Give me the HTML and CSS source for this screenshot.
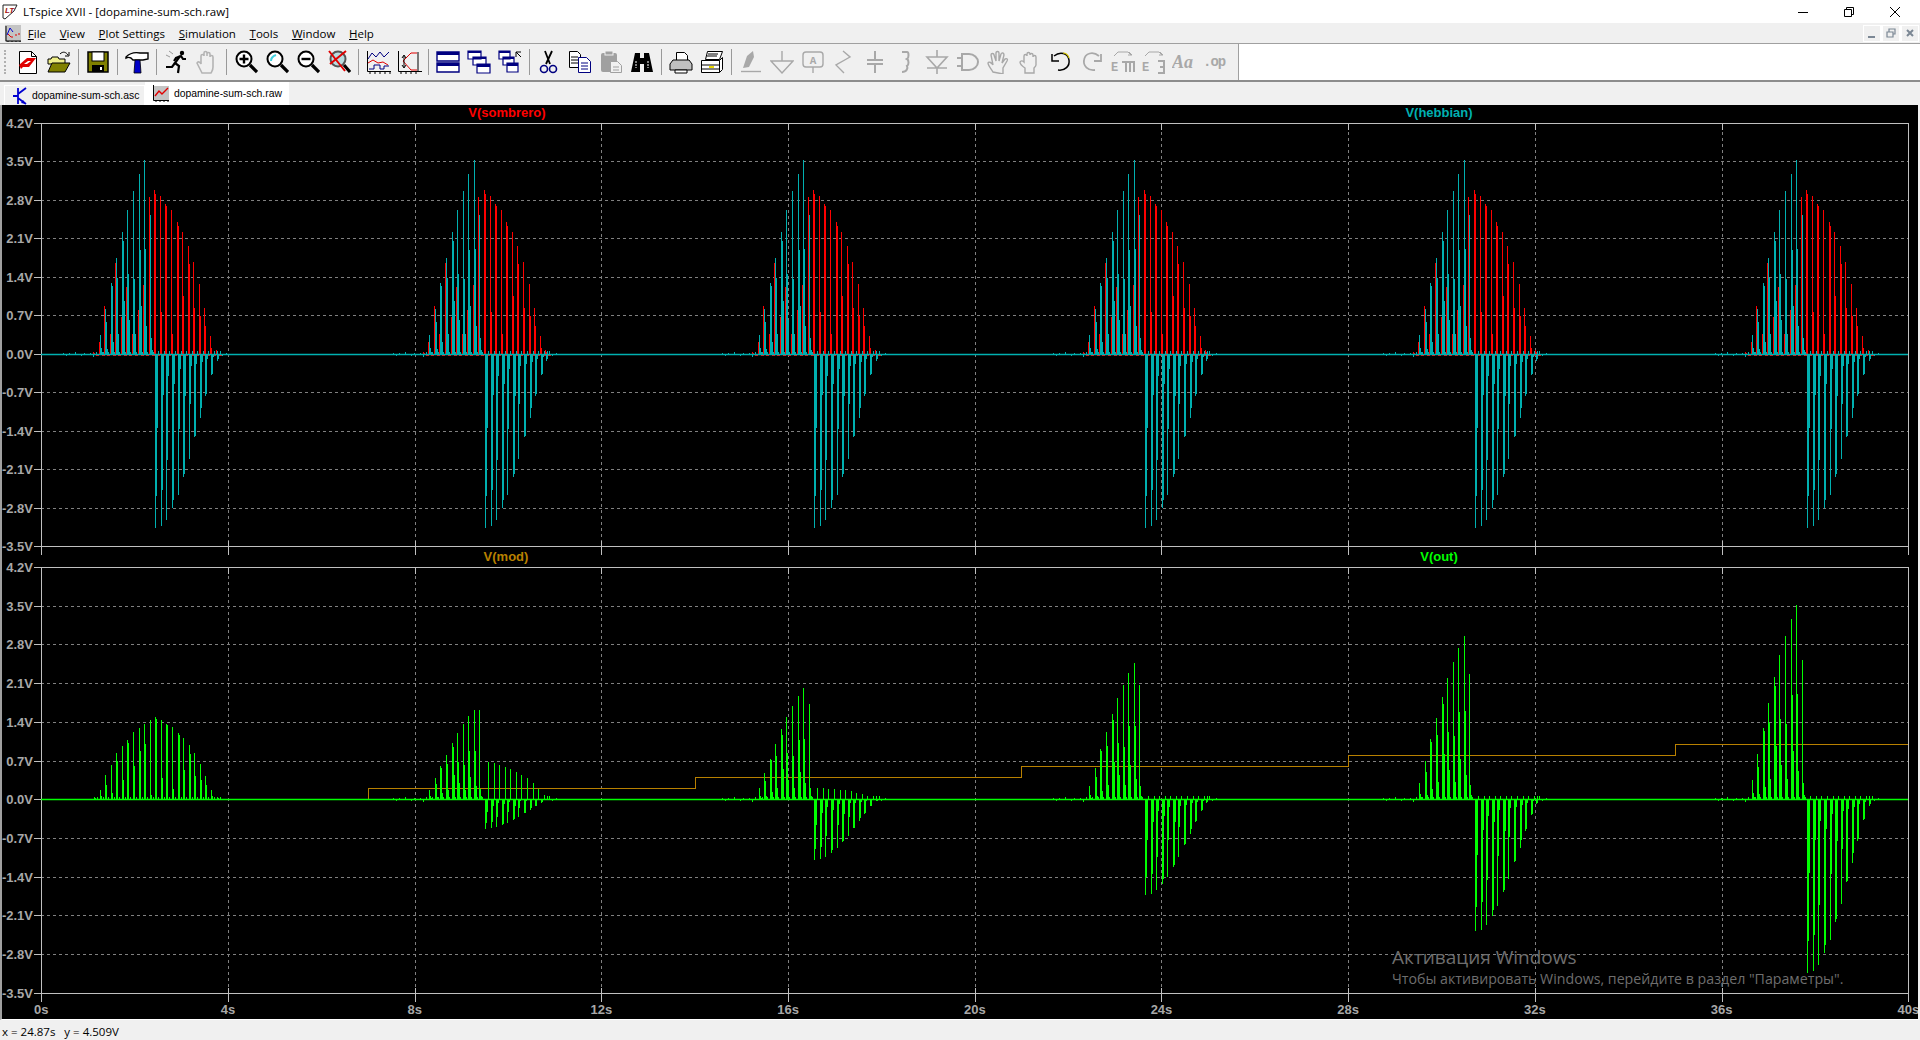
FILE: index.html
```html
<!DOCTYPE html>
<html lang="en">
<head>
    <meta charset="UTF-8">
    <title>LTspice XVII - [dopamine-sum-sch.raw]</title>
    <link rel="stylesheet" href="styles.css">
</head>
<body>
    <div class="titlebar">
        <svg class="app-icon" width="16" height="16" viewBox="0 0 16 16"><path d="M1 1h14l-3 6-9 8-2-1z" fill="#fff" stroke="#222"/><text x="3" y="9" class="logo-text">LT</text></svg>
        <span class="title">LTspice XVII - [dopamine-sum-sch.raw]</span>
        <div class="win-btns">
            <svg width="12" height="12" viewBox="0 0 12 12"><path d="M1 6.5h10" stroke="#000"/></svg>
            <svg width="12" height="12" viewBox="0 0 12 12"><path d="M1.5 3.5h7v7h-7zM3.5 3.5v-2h7v7h-2" fill="none" stroke="#000"/></svg>
            <svg width="12" height="12" viewBox="0 0 12 12"><path d="M1 1l10 10M11 1L1 11" stroke="#000"/></svg>
        </div>
    </div>

    <div class="menubar">
        <svg class="doc-icon" width="16" height="17" viewBox="0 0 16 17"><rect width="16" height="17" fill="#c4c4c4"/><path d="M1 1v15h15M3 16v1M7 16v1M11 16v1M15 16v1" fill="none" stroke="#000"/><path d="M2 10l3-7 3 4" fill="none" stroke="#0000d0"/><path d="M3 9l3 3h2M10 10h2M13 9h2" fill="none" stroke="#e00000"/></svg>
        <span class="menu-item"><u>F</u>ile</span>
        <span class="menu-item"><u>V</u>iew</span>
        <span class="menu-item"><u>P</u>lot Settings</span>
        <span class="menu-item"><u>S</u>imulation</span>
        <span class="menu-item"><u>T</u>ools</span>
        <span class="menu-item"><u>W</u>indow</span>
        <span class="menu-item"><u>H</u>elp</span>
        <div class="mdi-btns">
            <span class="mdi-btn"><svg width="10" height="10" viewBox="0 0 10 10"><path d="M1 9h7" stroke="#7b8794" stroke-width="2"/></svg></span>
            <span class="mdi-btn"><svg width="10" height="10" viewBox="0 0 10 10"><path d="M1 4h6v5H1zM3 4V1h6v5H7" fill="none" stroke="#7b8794" stroke-width="1.2"/></svg></span>
            <span class="mdi-btn"><svg width="10" height="10" viewBox="0 0 10 10"><path d="M2 2l6 6M8 2L2 8" stroke="#7b8794" stroke-width="2"/></svg></span>
        </div>
    </div>

    <div class="toolbar">
        <div class="tools">
            <span class="grip"></span>
            <span class="tool"><svg width="24" height="24" viewBox="0 0 24 24"><path d="M3.5 1.5h12l5 5v17h-17z" fill="#fff" stroke="#000"/><path d="M15.5 1.5v5h5" fill="none" stroke="#000"/><path d="M3 15l8-7h9l-7 9H7l-2 2z" fill="#e00000"/><path d="M8 14l4-3h3l-4 3z" fill="#fff"/></svg></span>
            <span class="tool"><svg width="24" height="24" viewBox="0 0 24 24"><path d="M1 9h3l1-2h6l1 2h6v5H1z" fill="#eeee88" stroke="#000"/><path d="M1 22l4-9h18l-5 9z" fill="#808000" stroke="#000"/><path d="M13 4c3-3 6-2 8 1" fill="none" stroke="#000"/><path d="M22 2v4h-4" fill="none" stroke="#000"/></svg></span>
            <span class="tool-sep"></span>
            <span class="tool"><svg width="24" height="24" viewBox="0 0 24 24"><rect x="2" y="2" width="20" height="20" fill="#808000" stroke="#000" stroke-width="1.5"/><rect x="6" y="2" width="12" height="9" fill="#fff" stroke="#000"/><rect x="6" y="15" width="12" height="7" fill="#000"/><rect x="14" y="17" width="2" height="3" fill="#fff"/></svg></span>
            <span class="tool-sep"></span>
            <span class="tool"><svg width="24" height="24" viewBox="0 0 24 24"><path d="M1 7c4-4 9-5 14-4h8v6l-5 1H8L6 8C4 7 3 7 1 8z" fill="#fff" stroke="#000" stroke-width="1.4"/><path d="M10 10h5l1 13H9z" fill="#0000c8" stroke="#000" stroke-width=".8"/></svg></span>
            <span class="tool-sep"></span>
            <span class="tool"><svg width="24" height="24" viewBox="0 0 24 24"><g fill="none" stroke="#000" stroke-width="2.2"><path d="M22 9h-3l-2-3-5 2-2 3"/><path d="M16 6l-5 7 4 3-1 7"/><path d="M11 13l-3 4H2"/></g><circle cx="18" cy="3" r="2.2"/><path d="M5 1l4 3M2 5l4 2" stroke="#999"/></svg></span>
            <span class="tool"><svg width="24" height="24" viewBox="0 0 24 24"><path d="M7 23C5 19 3 15 2 13c1-2 3-1 4 1V6c0-2 3-2 3 0V3c0-2 3-2 3 0v3-2c0-2 3-2 3 0v3c0-2 3-2 3 0v10c0 3-1 4-2 6z" fill="none" stroke="#b4b4b4" stroke-width="1.6"/></svg></span>
            <span class="tool-sep"></span>
            <span class="tool"><svg width="24" height="24" viewBox="0 0 24 24"><circle cx="10" cy="9" r="7.5" fill="#fff" stroke="#000" stroke-width="2"/><path d="M5.5 9h9M10 4.5v9" stroke="#000" stroke-width="2.4"/><path d="M16 15l7 7" stroke="#000" stroke-width="3.2"/></svg></span>
            <span class="tool"><svg width="24" height="24" viewBox="0 0 24 24"><circle cx="10" cy="9" r="7.5" fill="#fff" stroke="#000" stroke-width="2"/><path d="M6 11c0-3 2-5 5-6" fill="none" stroke="#40d0e0" stroke-width="2"/><path d="M16 15l7 7" stroke="#000" stroke-width="3.2"/></svg></span>
            <span class="tool"><svg width="24" height="24" viewBox="0 0 24 24"><circle cx="10" cy="9" r="7.5" fill="#fff" stroke="#000" stroke-width="2"/><path d="M5.5 9h9" stroke="#000" stroke-width="2.4"/><path d="M16 15l7 7" stroke="#000" stroke-width="3.2"/></svg></span>
            <span class="tool"><svg width="24" height="24" viewBox="0 0 24 24"><circle cx="11" cy="9" r="7.5" fill="#b8dce0" stroke="#555" stroke-width="2"/><path d="M17 15l6 7" stroke="#000" stroke-width="3.2"/><path d="M2 1l16 20M19 1L3 14" stroke="#e00000" stroke-width="2"/></svg></span>
            <span class="tool-sep"></span>
            <span class="tool"><svg width="25" height="24" viewBox="0 0 25 24"><path d="M1.5 1v20.5H25M4 21v3M9 21v3M14 21v3M19 21v3M24 21v3" fill="none" stroke="#000"/><path d="M2 9l4-6 4 4 4-5 4 5 5-5" fill="none" stroke="#000080"/><path d="M2 13l5-3 5 3 5-1 5 3" fill="none" stroke="#e00000"/><path d="M3 19h5v-4h6v4h4v-3h5" fill="none" stroke="#000080"/></svg></span>
            <span class="tool"><svg width="25" height="24" viewBox="0 0 25 24"><path d="M1.5 1v20.5H25M4 21v3M9 21v3M14 21v3M19 21v3" fill="none" stroke="#000"/><path d="M6 11l8-8h6M6 11l8 9h6" fill="none" stroke="#e00000"/><path d="M7 6v11M5 8l2-3 2 3M5 15l2 3 2-3M21 2v19" fill="none" stroke="#000"/></svg></span>
            <span class="tool-sep"></span>
            <span class="tool"><svg width="24" height="24" viewBox="0 0 24 24"><path d="M1 2h22v9H1zM1 13h22v9H1z" fill="#fff" stroke="#000080" stroke-width="1.4"/><path d="M1 2h22v3H1zM1 13h22v3H1z" fill="#000080"/></svg></span>
            <span class="tool"><svg width="24" height="24" viewBox="0 0 24 24"><path d="M1 1h13v8H1zM6 7h13v8H6zM10 14h13v9H10z" fill="#fff" stroke="#000080" stroke-width="1.2"/><path d="M1 1h13v2H1zM6 7h13v2H6zM10 14h13v3H10z" fill="#000080"/></svg></span>
            <span class="tool"><svg width="24" height="24" viewBox="0 0 24 24"><path d="M1 1h11v8H1zM5 7h11v8H5zM9 13h11v9H9z" fill="#fff" stroke="#000080" stroke-width="1.2"/><path d="M1 1h11v2H1zM5 7h11v2H5zM9 13h11v3H9z" fill="#000080"/><path d="M18 2h5M18 2v5M18 2l5 5" stroke="#000" fill="none"/></svg></span>
            <span class="tool-sep"></span>
            <span class="tool"><svg width="24" height="24" viewBox="0 0 24 24"><path d="M8 1l5 13M15 1L9 14" stroke="#000" stroke-width="1.8"/><circle cx="7" cy="19" r="3.5" fill="none" stroke="#000080" stroke-width="1.6"/><circle cx="16" cy="19" r="3.5" fill="none" stroke="#000080" stroke-width="1.6"/></svg></span>
            <span class="tool"><svg width="24" height="24" viewBox="0 0 24 24"><path d="M1.5 1.5h8l3 3v13h-11z" fill="#fff" stroke="#000"/><path d="M3 7h7M3 10h7M3 13h7" stroke="#000"/><path d="M10.5 7.5h8l4 4v11h-12z" fill="#fff" stroke="#000080"/><path d="M13 13h7M13 16h7M13 19h7" stroke="#000080"/></svg></span>
            <span class="tool"><svg width="24" height="24" viewBox="0 0 24 24"><rect x="2" y="3" width="16" height="19" rx="2" fill="#a0a0a0"/><rect x="6" y="1" width="8" height="4" fill="#a0a0a0" stroke="#f0f0f0"/><path d="M11.5 11.5h7l4 4v7h-11z" fill="#f0f0f0" stroke="#a0a0a0"/><path d="M14 17h6M14 20h6" stroke="#a0a0a0"/></svg></span>
            <span class="tool"><svg width="24" height="24" viewBox="0 0 24 24"><path d="M5 3h5v5h4V3h5l4 19h-9v-8h-4v8H1z" fill="#000"/><path d="M6 11v7M18 11v7" stroke="#fff" stroke-dasharray="2 1"/></svg></span>
            <span class="tool-sep"></span>
            <span class="tool"><svg width="24" height="24" viewBox="0 0 24 24"><path d="M7.5 2.5h8l3 3v6h-11z" fill="#fff" stroke="#000"/><path d="M4 10h16l3 4v6H1v-6z" fill="#c0c0c0" stroke="#000"/><path d="M6 20h12v3H6z" fill="#fff" stroke="#000"/></svg></span>
            <span class="tool"><svg width="24" height="24" viewBox="0 0 24 24"><path d="M7.5 1.5h15l-3 8h-14z" fill="#fff" stroke="#000"/><path d="M8 4h10M7 6h10" stroke="#000"/><path d="M1.5 10.5h18v12h-18zM19.5 10.500l3-3v12l-3 3" fill="#fff" stroke="#000"/><path d="M2 15h17M2 19h17" stroke="#000"/><rect x="9" y="16" width="5" height="2" fill="#e8d800"/></svg></span>
            <span class="tool-sep"></span>
            <span class="tool"><svg class="off" width="24" height="24" viewBox="0 0 24 24"><path d="M4 18L8 6l6-5 1 6-5 10z" fill="#a8a8a8" stroke="none"/><path d="M2 21.500h20"/></svg></span>
            <span class="tool"><svg class="off" width="24" height="24" viewBox="0 0 24 24"><path d="M12 1v10M1 11h22L12 23z"/></svg></span>
            <span class="tool"><svg class="off" width="24" height="24" viewBox="0 0 24 24"><rect x="2" y="2" width="20" height="15" rx="3"/><path d="M12 17v6"/><text x="12" y="14" class="icon-a">A</text></svg></span>
            <span class="tool"><svg class="off" width="24" height="24" viewBox="0 0 24 24"><path d="M11 1l7 6-14 8 8 8"/></svg></span>
            <span class="tool"><svg class="off" width="24" height="24" viewBox="0 0 24 24"><path d="M12 1v9M4 10h16M4 14h16M12 14v9" stroke-width="2"/></svg></span>
            <span class="tool"><svg class="off" width="24" height="24" viewBox="0 0 24 24"><path d="M8 2h5c2 0 2 6 0 7 2 1 2 6 0 7 1 2 0 6-5 6" stroke-width="2"/></svg></span>
            <span class="tool"><svg class="off" width="24" height="24" viewBox="0 0 24 24"><path d="M12 0v7M2 7h20L12 18zM2 18h20M12 18v6" stroke-width="1.6"/></svg></span>
            <span class="tool"><svg class="off" width="24" height="24" viewBox="0 0 24 24"><path d="M6 4h7c5 0 9 4 9 8s-4 8-9 8H6zM1 8h5M1 16h5" stroke-width="2"/></svg></span>
            <span class="tool"><svg class="off" width="24" height="24" viewBox="0 0 24 24"><path d="M6 22c-2-3-5-7-5-9 1-2 4 0 5 2L4 5c0-2 3-2 3 0l2 6V3c0-2 3-2 3 0v8l2-7c1-2 3-1 3 1l-2 8 3-4c2-1 3 0 2 2l-4 7v6z"/></svg></span>
            <span class="tool"><svg class="off" width="24" height="24" viewBox="0 0 24 24"><path d="M7 23v-5c-3-2-5-4-5-6 1-2 3-1 4 0V6c0-2 3-2 3 0V4c0-2 3-2 3 0v1c0-2 3-2 3 0v2c0-2 3-2 3 0v8c0 1-1 2-2 3v5z"/></svg></span>
            <span class="tool"><svg width="24" height="24" viewBox="0 0 24 24"><path d="M5 6c6-5 14-3 15 4 1 6-4 11-11 10" fill="none" stroke="#000" stroke-width="1.5"/><path d="M14 3c3 0 5 2 6 5" fill="none" stroke="#d8c800" stroke-width="1.2"/><path d="M3 4v7h7" fill="none" stroke="#000" stroke-width="1.5"/></svg></span>
            <span class="tool"><svg width="24" height="24" viewBox="0 0 24 24"><path d="M19 6C13 1 5 3 4 10c-1 6 4 11 11 10" fill="none" stroke="#a8a8a8" stroke-width="1.8"/><path d="M21 4v7h-7" fill="none" stroke="#a8a8a8" stroke-width="1.8"/></svg></span>
            <span class="tool"><svg class="off" width="24" height="24" viewBox="0 0 24 24"><path d="M3 6l4-4h10l3 3M18 2l3 3h-4" stroke-width="1"/><text x="0" y="21" class="icon-e">E</text><path d="M11 12h12v10M15 12v10M19 12v10" stroke-width="2"/></svg></span>
            <span class="tool"><svg class="off" width="24" height="24" viewBox="0 0 24 24"><path d="M3 6l4-4h10l3 3M18 2l3 3h-4" stroke-width="1"/><text x="0" y="21" class="icon-e">E</text><path d="M16 11h6v12h-6M18 17h4" stroke-width="2"/></svg></span>
            <span class="tool"><svg width="24" height="24" viewBox="0 0 24 24"><text x="0" y="18" class="icon-aa">Aa</text></svg></span>
            <span class="tool"><svg width="24" height="24" viewBox="0 0 24 24"><text x="0" y="16" class="icon-op">.op</text></svg></span>
        </div>
    </div>

    <div class="tabs">
        <div class="tab">
            <svg width="16" height="18" viewBox="0 0 16 18"><path d="M6 1v16M1 9h5M6 7l8-6M6 11l8 6" fill="none" stroke="#0000d0" stroke-width="1.8"/><path d="M14 17l-5-1 2-3z" fill="#0000d0"/></svg>
            <span>dopamine-sum-sch.asc</span>
        </div>
        <div class="tab tab-active">
            <svg width="17" height="17" viewBox="0 0 17 17"><rect x="2" y="1" width="15" height="14" fill="#c4c4c4"/><path d="M1.500 0v15.500H17M4 15v2M8 15v2M12 15v2M16 15v2" fill="none" stroke="#000"/><path d="M3 11l4-5 3 3 6-6" fill="none" stroke="#e00000" stroke-width="1.4"/></svg>
            <span>dopamine-sum-sch.raw</span>
        </div>
    </div>

    <div class="plot">
        <svg id="plotSvg" width="1916" height="914" viewBox="2 105 1916 914"></svg>
        <div class="watermark">
            <div class="wm-title">Активация Windows</div>
            <div class="wm-text">Чтобы активировать Windows, перейдите в раздел "Параметры".</div>
        </div>
    </div>

    <div class="status">x = 24.87s   y = 4.509V</div>

    <script src="plot.js"></script>
</body>
</html>
```

FILE: styles.css
```css
html, body {
    margin: 0;
    height: 100%;
    overflow: hidden;
}

body {
    font-family: "Open Sans", "Noto Sans", sans-serif;
    font-size: 12px;
    color: #000;
    background-color: #fff;
    display: flex;
    flex-direction: column;
}

svg {
    display: block;
    flex: none;
}

.titlebar {
    height: 23px;
    flex: none;
    display: flex;
    align-items: center;
    padding-left: 2px;
    background-color: #fff;
}

.logo-text {
    font: italic bold 8px "Liberation Sans", sans-serif;
    fill: #a01010;
}

.title {
    margin-left: 5px;
    font-size: 11.5px;
}

.win-btns {
    margin-left: auto;
    margin-right: 19px;
    display: flex;
    gap: 34px;
}

.menubar {
    height: 20px;
    flex: none;
    display: flex;
    align-items: center;
    padding-left: 5px;
    background-color: #f0f0f0;
    border-bottom: 1px solid #a0a0a0;
}

.menu-item {
    padding: 0 6.85px;
    font-size: 11.5px;
}

.mdi-btns {
    margin-left: auto;
    margin-right: 1px;
    display: flex;
    gap: 1px;
    background-color: #fff;
}

.mdi-btn {
    width: 16px;
    height: 15px;
    display: flex;
    align-items: center;
    justify-content: center;
    background-color: #f0f0f0;
    border: 1px solid #fff;
}

.toolbar {
    height: 36px;
    flex: none;
    background-color: #fff;
    border-bottom: 2px solid #8c8c8c;
}

.tools {
    width: 1238px;
    height: 36px;
    display: flex;
    align-items: center;
    background-color: #f0f0f0;
    border-right: 1px solid #a0a0a0;
}

.grip {
    width: 1px;
    height: 24px;
    margin: 0 5.5px 0 4px;
    border-left: 2px dotted #b0b0b0;
}

.tool {
    width: 30.95px;
    flex: none;
    display: flex;
    justify-content: center;
}

.tool-sep {
    width: 1px;
    height: 26px;
    flex: none;
    margin: 0 3.6px;
    background-color: #999;
}

.off {
    fill: none;
    stroke: #a8a8a8;
    stroke-width: 1.4;
}

.icon-a {
    font: bold 11px "Liberation Mono", monospace;
    fill: #a8a8a8;
    stroke: none;
    text-anchor: middle;
}

.icon-e {
    font: bold 12px "Liberation Mono", monospace;
    fill: #a8a8a8;
    stroke: none;
}

.icon-aa {
    font: italic bold 18px "Liberation Serif", serif;
    fill: #a8a8a8;
}

.icon-op {
    font: bold 14px "Liberation Mono", monospace;
    letter-spacing: -1px;
    fill: #a8a8a8;
}

.tabs {
    height: 23px;
    flex: none;
    display: flex;
    align-items: flex-end;
    padding-left: 4px;
    background-color: #f0f0f0;
    font-family: "Liberation Sans", sans-serif;
    font-size: 10.4px;
    white-space: nowrap;
}

.tab {
    height: 20px;
    width: 141px;
    flex: none;
    box-sizing: border-box;
    display: flex;
    align-items: center;
    gap: 4px;
    padding-left: 7px;
    border: 1px solid #fff;
    border-bottom: none;
}

.tab-active {
    height: 23px;
    width: 144px;
    gap: 5px;
    padding-left: 6px;
    padding-bottom: 2px;
    background-color: #fff;
}

.plot {
    height: 914px;
    flex: none;
    position: relative;
    background-color: #000;
    border-left: 2px solid #a0a0a0;
    border-right: 2px solid #f0f0f0;
    border-bottom: 1px solid #fff;
}

.watermark {
    position: absolute;
    left: 1390px;
    top: 839px;
    color: #6e6e6e;
    font-family: "Open Sans", sans-serif;
    white-space: nowrap;
    pointer-events: none;
}

.wm-title {
    font-size: 19px;
    line-height: 26px;
}

.wm-text {
    font-size: 14.2px;
    line-height: 20px;
    margin-top: -1px;
}

.status {
    height: 20px;
    flex: none;
    line-height: 24px;
    padding-left: 2px;
    background-color: #f0f0f0;
    font-size: 11.5px;
    white-space: pre;
}

.axis-label {
    font: bold 13px "Liberation Sans", sans-serif;
    fill: #a8a8a8;
}

.trace-label {
    font: bold 13px "Liberation Sans", sans-serif;
    text-anchor: middle;
}

.frame {
    stroke: #c0c0c0;
    fill: none;
    shape-rendering: crispEdges;
}

.grid {
    stroke: #808080;
    stroke-dasharray: 3 3;
    fill: none;
    shape-rendering: crispEdges;
}

.trace {
    fill: none;
    stroke-width: 1;
    shape-rendering: crispEdges;
}

.baseline {
    fill: none;
    stroke-width: 1.5;
}
```

FILE: plot.js
```js
// Dibuja los dos paneles del waveform viewer dentro de #plotSvg
const X0 = 41.3;
const PX_PER_SEC = 46.675;
const LEFT = 41;
const RIGHT = 1908;
const SPACE = 5.57;

// posicion del pico de cada rafaga
const PEAKS = [144.3, 474, 803.3, 1134, 1464, 1796.3];

// envolvente de V(sombrero), mitad de altura, 23 pulsos
const ENV = [2, 9, 24, 34, 46, 53, 59, 67, 71, 75, 79, 82, 79, 75, 72, 66, 61, 54, 46, 35, 23, 9, 2];
const ENV2 = [1, 3, 14, 6, 38, 19, 56, 33, 48, 55, 4, 80, 21, 74, 10, 64, 29, 45, 23, 19, 14, 3, 1];

// V(sombrero) en el panel superior: lo que asoma detras de V(hebbian) antes del pico
const RED_LEFT = [2, 12, 48, 20, 91, 37, 67, 20, 44, 69, 157];

// V(hebbian): parte positiva y negativa
const POS = [19, 45, 71, 96, 122, 144, 163, 180, 194, 139];
const POS2 = [6, 32, 68, 76, 113, 80, 75, 104, 105, 16];
const POS3 = [2, 5, 12, 20, 53, 34, 20, 48, 28, 4];
const NEG = [174, 172, 166, 154, 141, 123, 105, 83, 64, 42, 21, 7];
const NEG2 = [142, 136, 106, 146, 75, 120, 50, 82, 54, 40, 20, 5];
const NEG3 = [74, 41, 22, 30, 15, 42, 12, 10, 8, 5, 3, 1];

// ganancias de V(out) en cada rafaga
const OUT_POS = [0, 0.46, 0.57, 0.7, 0.84, 1];
const OUT_LAST = [0, 89, 95, 114, 125, 139];
const OUT_NEG = [0, 0.17, 0.35, 0.55, 0.76, 1];
const OUT_TAIL = [1, 0.45, 0.14, 0.03, 0.02, 0.02];

const WIGGLE = [1, -2, 1, -1, 2, -1, -2, 1, -1, 1, -3, 2];

let svg = '';

function bar(x, base, h) {
    const px = Math.round(x) + 0.5;
    return `M${px} ${base}V${Math.round(base - h)}`;
}

function wiggles(center, base) {
    let d = '';
    for (let i = 0; i < WIGGLE.length; i++) {
        const x = center - 92 + i * 3;
        d += bar(x, base, WIGGLE[i]);
    }
    d += bar(center + 62, base, 3) + bar(center + 67, base, -2) + bar(center + 71, base, 1);
    return d;
}

function redPath(base) {
    let d = '';
    PEAKS.forEach(function (peak) {
        const center = peak + 11;
        ENV.forEach(function (h, i) {
            const x = center + (i - 11) * SPACE - 1;
            if (i < RED_LEFT.length) {
                d += bar(x, base, RED_LEFT[i]) + bar(x + 1, base, RED_LEFT[i] * 0.5);
            } else {
                d += bar(x, base, h * 2) + bar(x + 1, base, ENV2[i] * 2);
            }
            d += `M${Math.round(x) + 3} ${base + 1.5}h3`;
        });
    });
    return d;
}

function cyanPath(base) {
    let d = '';
    PEAKS.forEach(function (peak) {
        const center = peak + 11;
        d += hebbianBurst(center, base, 1, POS[POS.length - 1], 1);
        d += wiggles(center, base);
    });
    return d;
}

function hebbianBurst(center, base, pos, last, neg) {
    let d = '';
    POS.forEach(function (h, i) {
        const x = center - (POS.length - i) * SPACE;
        const scale = i === POS.length - 1 ? last / h : pos;
        d += bar(x, base, h * scale) + bar(x + 1, base, POS2[i] * scale);
        d += bar(x + 2, base, POS3[i] * scale) + bar(x + 3, base, 2);
    });
    NEG.forEach(function (h, i) {
        const x = center + i * SPACE;
        d += bar(x, base, -h * neg) + bar(x + 1, base, -NEG2[i] * neg);
        d += bar(x + 2, base, -NEG3[i] * neg) + bar(x + 3, base, 3);
    });
    return d;
}

function outPath(base) {
    let d = '';
    PEAKS.forEach(function (peak, k) {
        const center = peak + 11;
        if (k === 0) {
            ENV.forEach(function (h, i) {
                const x = center + (i - 11) * SPACE;
                d += bar(x, base, h) + bar(x + 1, base, ENV2[i]) + bar(x + 3, base, 2);
            });
            return;
        }
        d += hebbianBurst(center, base, OUT_POS[k], OUT_LAST[k], OUT_NEG[k]);
        ENV.slice(11).forEach(function (h, i) {
            const x = center + i * SPACE + 3;
            d += bar(x, base, Math.max(h * OUT_TAIL[k], 3));
        });
        d += wiggles(center, base);
    });
    return d;
}

function modPath(base) {
    let d = '';
    for (let k = 1; k <= 5; k++) {
        const x = Math.round(X0 + 7 * k * PX_PER_SEC) + 0.5;
        const end = k < 5 ? Math.round(X0 + 7 * (k + 1) * PX_PER_SEC) + 0.5 : RIGHT;
        d += `M${x} ${base - 11 * (k - 1)}V${base - 11 * k}H${end}`;
    }
    return d;
}

function drawPane(top, step, labelsOn) {
    const y = function (i) { return Math.round(top + step * i) + 0.5; };

    // cuadricula
    for (let i = 1; i < 11; i++) {
        svg += `<path class="grid" d="M${LEFT} ${y(i)}H${RIGHT}"/>`;
        svg += `<path class="frame" d="M34 ${y(i)}H${LEFT}"/>`;
    }
    for (let s = 4; s < 40; s += 4) {
        const x = Math.round(X0 + s * PX_PER_SEC) + 0.5;
        svg += `<path class="grid" d="M${x} ${y(0) + 8}V${y(11) - 1}"/>`;
        svg += `<path class="frame" d="M${x} ${y(0)}v6M${x} ${y(11) - 6}V${y(11) + 8}"/>`;
    }

    // marco
    svg += `<path class="frame" d="M34 ${y(0)}H${RIGHT}V${y(11)}H34M${LEFT + 0.5} ${y(0)}V${y(11) + 8}M${RIGHT} ${y(11)}v8"/>`;

    // etiquetas del eje Y
    for (let i = 0; i < 12; i++) {
        const v = (4.2 - 0.7 * i).toFixed(1);
        svg += `<text class="axis-label" x="33" y="${y(i) + 4}" text-anchor="end">${v}V</text>`;
    }

    if (labelsOn) {
        for (let s = 0; s <= 40; s += 4) {
            const x = X0 + s * PX_PER_SEC;
            svg += `<text class="axis-label" x="${x}" y="${y(11) + 20}" text-anchor="middle">${s}s</text>`;
        }
    }
}

function trace(d, color) {
    svg += `<path class="trace" stroke="${color}" d="${d}"/>`;
}

function baseline(y, color) {
    svg += `<path class="baseline" stroke="${color}" d="M${LEFT} ${y}H${RIGHT}"/>`;
}

function label(text, x, y, color) {
    svg += `<text class="trace-label" x="${x}" y="${y}" fill="${color}">${text}</text>`;
}

drawPane(123, 38.45, false);
drawPane(567, 38.7, true);

label('V(sombrero)', 507, 117, '#ff0000');
label('V(hebbian)', 1439, 117, '#00b0b0');
label('V(mod)', 506, 561, '#b88000');
label('V(out)', 1439, 561, '#00ff00');

// panel superior
trace(redPath(354), '#ff0000');
trace(cyanPath(354), '#00b0b0');
baseline(354.5, '#00b0b0');

// panel inferior
trace(modPath(799.5), '#b88000');
trace(outPath(799), '#00ff00');
baseline(799.5, '#00ff00');

document.getElementById('plotSvg').innerHTML = svg;
```
